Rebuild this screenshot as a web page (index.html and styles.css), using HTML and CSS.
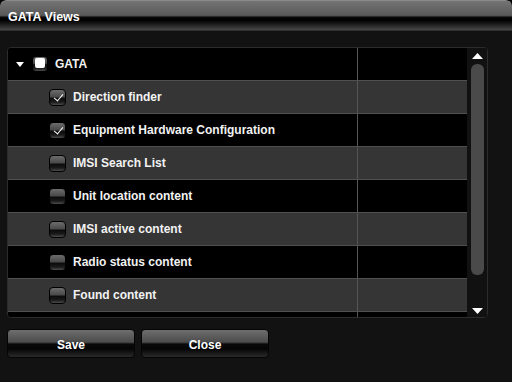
FILE: index.html
```html
<!DOCTYPE html>
<html lang="en">
<head>
    <title>GATA Views</title>
    <link rel="stylesheet" href="styles.css">
</head>
<body>
    <div class="window">
        <div class="titlebar">GATA Views</div>

        <div class="content">
            <div class="panel">
                <div class="list">
                    <div class="row">
                        <div class="cell name">
                            <span class="expander"></span>
                            <span class="check partial"></span>
                            <span class="label">GATA</span>
                        </div>
                        <div class="cell extra"></div>
                    </div>
                    <div class="row alt">
                        <div class="cell name child">
                            <span class="check checked"></span>
                            <span class="label">Direction finder</span>
                        </div>
                        <div class="cell extra"></div>
                    </div>
                    <div class="row">
                        <div class="cell name child">
                            <span class="check checked"></span>
                            <span class="label">Equipment Hardware Configuration</span>
                        </div>
                        <div class="cell extra"></div>
                    </div>
                    <div class="row alt">
                        <div class="cell name child">
                            <span class="check"></span>
                            <span class="label">IMSI Search List</span>
                        </div>
                        <div class="cell extra"></div>
                    </div>
                    <div class="row">
                        <div class="cell name child">
                            <span class="check"></span>
                            <span class="label">Unit location content</span>
                        </div>
                        <div class="cell extra"></div>
                    </div>
                    <div class="row alt">
                        <div class="cell name child">
                            <span class="check"></span>
                            <span class="label">IMSI active content</span>
                        </div>
                        <div class="cell extra"></div>
                    </div>
                    <div class="row">
                        <div class="cell name child">
                            <span class="check"></span>
                            <span class="label">Radio status content</span>
                        </div>
                        <div class="cell extra"></div>
                    </div>
                    <div class="row alt">
                        <div class="cell name child">
                            <span class="check"></span>
                            <span class="label">Found content</span>
                        </div>
                        <div class="cell extra"></div>
                    </div>
                    <div class="row">
                        <div class="cell name child"></div>
                        <div class="cell extra"></div>
                    </div>
                </div>

                <div class="scrollbar">
                    <svg class="arrow" width="11" height="6" viewBox="0 0 11 6"><polygon points="0,6 5.5,0 11,6" fill="#fff"/></svg>
                    <div class="track"><div class="thumb"></div></div>
                    <svg class="arrow" width="11" height="6" viewBox="0 0 11 6"><polygon points="0,0 11,0 5.5,6" fill="#fff"/></svg>
                </div>
            </div>

            <div class="buttons">
                <button class="btn">Save</button>
                <button class="btn">Close</button>
            </div>
        </div>
    </div>
</body>
</html>
```

FILE: styles.css
```css
:root {
    --window-bg: #121212;
    --row-alt: #353535;
    --row-line: #505050;
    --text: #f2f2f2;
}

html, body {
    margin: 0;
    height: 100%;
    background-color: #000;
}

body {
    font-family: 'Liberation Sans', Arial, sans-serif;
    font-size: 12px;
    font-weight: bold;
    color: var(--text);
}

.window {
    width: 512px;
    height: 382px;
    box-sizing: border-box;
    background-color: var(--window-bg);
    border-radius: 6px 6px 0 0;
    overflow: hidden;
    display: flex;
    flex-direction: column;
}

.titlebar {
    height: 31px;
    box-sizing: border-box;
    padding: 9px 0 0 8px;
    font-size: 12.5px;
    color: #fff;
    border-top: 1px solid #8a8a8a;
    border-bottom: 1px solid #2e2e2e;
    border-radius: 6px 6px 0 0;
    background: linear-gradient(to bottom,
        #747474 0px, #5a5a5a 14px, #4a4a4a 15px,
        #0a0a0a 16px, #000 19px, #1a1a1a 23px, #484848 29px);
}

.content {
    padding: 16px 24px 0 7px;
}

.panel {
    height: 271px;
    box-sizing: border-box;
    border: 1px solid #2c2c2c;
    border-radius: 4px;
    background-color: #000;
    display: flex;
    overflow: hidden;
}

.list {
    flex: 1;
    min-width: 0;
    display: flex;
    flex-direction: column;
}

.row {
    display: flex;
    height: 33px;
    flex-shrink: 0;
    box-sizing: border-box;
    border-bottom: 1px solid var(--row-line);
    background-color: #000;
}

.row.alt {
    background-color: var(--row-alt);
}

.cell {
    display: flex;
    align-items: center;
    box-sizing: border-box;
}

.cell.name {
    width: 350px;
    flex-shrink: 0;
    border-right: 1px solid #555;
    padding-left: 8px;
}

.cell.name.child {
    padding-left: 41px;
}

.cell.extra {
    flex: 1;
}

.expander {
    width: 0;
    height: 0;
    border-left: 4.5px solid transparent;
    border-right: 4.5px solid transparent;
    border-top: 5px solid #fff;
    margin-right: 8px;
    margin-top: 1px;
}

.check {
    width: 17px;
    height: 17px;
    box-sizing: border-box;
    border: 1px solid #000;
    border-radius: 4px;
    background: linear-gradient(to bottom,
        #6c6c6c 0%, #4a4a4a 45%, #0c0c0c 55%, #1a1a1a 80%, #4c4c4c 100%);
    margin-right: 7px;
    position: relative;
    flex-shrink: 0;
}

.check.partial {
    width: 16px;
    height: 16px;
    margin-right: 7px;
}

.check.partial::after {
    content: "";
    position: absolute;
    left: 2px;
    top: 1px;
    width: 10px;
    height: 10px;
    border-radius: 2px;
    background-color: #fff;
}

.check.checked::after {
    content: "";
    position: absolute;
    left: 6px;
    top: 2px;
    width: 4px;
    height: 8px;
    border-right: 1.5px solid #fff;
    border-bottom: 1.5px solid #fff;
    transform: rotate(40deg);
}

.label {
    white-space: nowrap;
}

.scrollbar {
    width: 20px;
    flex-shrink: 0;
    background-color: #111;
    display: flex;
    flex-direction: column;
    align-items: center;
    padding: 5px 0 3px;
    box-sizing: border-box;
}

.arrow {
    flex-shrink: 0;
}

.track {
    flex: 1;
    width: 100%;
    padding: 5px 0 0;
    box-sizing: border-box;
    display: flex;
    justify-content: center;
}

.thumb {
    width: 13px;
    height: 211px;
    border-radius: 6px;
    background-color: #4a4a4a;
    margin-left: 1px;
}

.buttons {
    display: flex;
    gap: 6px;
    margin-top: 11px;
}

.btn {
    width: 128px;
    height: 29px;
    border: 1px solid #050505;
    border-radius: 4px;
    color: #fff;
    font-family: 'Liberation Sans', Arial, sans-serif;
    font-size: 12px;
    font-weight: bold;
    padding: 2px 0 0;
    background: linear-gradient(to bottom,
        #6e6e6e 0%, #4c4c4c 45%, #0a0a0a 52%, #050505 70%, #2a2a2a 100%);
    cursor: pointer;
}
```
